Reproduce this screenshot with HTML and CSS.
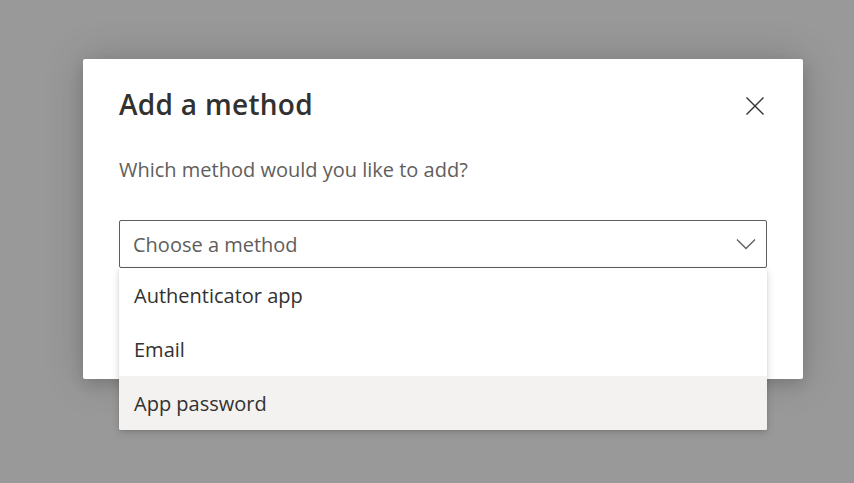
FILE: index.html
```html
<!DOCTYPE html>
<html lang="en">
<head>
    <meta charset="UTF-8">
    <meta name="viewport" content="width=device-width, initial-scale=1.0">
    <title>Add a method</title>
    <link rel="stylesheet" href="styles.css">
</head>
<body>
    <div class="modal">
        <div class="modal-header">
            <h1>Add a method</h1>
            <button class="btn-close" aria-label="Close">
                <svg width="20" height="20" viewBox="0 0 20 20">
                    <path d="M1.5 1.5 L18.5 18.5 M18.5 1.5 L1.5 18.5" stroke="#323130" stroke-width="1.4" fill="none"/>
                </svg>
            </button>
        </div>
        <p class="subtitle">Which method would you like to add?</p>
        <div class="dropdown">
            <div class="dropdown-box">
                <span class="placeholder">Choose a method</span>
                <svg class="chevron" width="20" height="12" viewBox="0 0 20 12">
                    <path d="M1 1.5 L10 10.5 L19 1.5" stroke="#605e5c" stroke-width="1.3" fill="none"/>
                </svg>
            </div>
            <ul class="dropdown-list">
                <li>Authenticator app</li>
                <li>Email</li>
                <li class="hover">App password</li>
            </ul>
        </div>
    </div>
</body>
</html>
```

FILE: styles.css
```css
body {
    margin: 0;
    height: 483px;
    background-color: #999999;
    font-family: "Open Sans", "Noto Sans", sans-serif;
    color: #323130;
    padding: 59px 0 0 83px;
    box-sizing: border-box;
    overflow: hidden;
}

.modal {
    width: 720px;
    height: 320px;
    background-color: white;
    border-radius: 2px;
    box-shadow: 0 0 40px rgba(0, 0, 0, 0.18), 0 6px 14px rgba(0, 0, 0, 0.12);
    padding: 27px 36px 0 36px;
    box-sizing: border-box;
}

.modal-header {
    display: flex;
    justify-content: space-between;
    align-items: center;
    height: 36px;
}

.modal-header h1 {
    margin: 0;
    font-size: 28px;
    font-weight: 600;
    letter-spacing: 0.3px;
    color: #323130;
}

.btn-close {
    width: 24px;
    height: 24px;
    padding: 0;
    border: none;
    background: none;
    display: flex;
    align-items: center;
    justify-content: center;
    margin-top: 4px;
}

.subtitle {
    margin: 34px 0 0 0;
    line-height: 28px;
    font-size: 20px;
    color: #605e5c;
}

.dropdown {
    position: relative;
    margin-top: 36px;
}

.dropdown-box {
    height: 48px;
    border: 1px solid #605e5c;
    border-radius: 2px;
    box-sizing: border-box;
    display: flex;
    align-items: center;
    justify-content: space-between;
    padding: 0 10px 0 13px;
}

.placeholder {
    font-size: 20px;
    color: #605e5c;
}

.chevron {
    margin-top: -1px;
}

.dropdown-list {
    position: absolute;
    top: 48px;
    left: 0;
    right: 0;
    margin: 0;
    padding: 0;
    list-style: none;
    background-color: white;
    border-radius: 0 0 2px 2px;
    box-shadow: 0 3px 8px rgba(0, 0, 0, 0.14), 0 1px 3px rgba(0, 0, 0, 0.1);
}

.dropdown-list li {
    height: 54px;
    display: flex;
    align-items: center;
    padding-left: 15px;
    font-size: 20px;
    color: #323130;
}

.dropdown-list li.hover {
    background-color: #f3f2f1;
    border-radius: 0 0 2px 2px;
}
```
